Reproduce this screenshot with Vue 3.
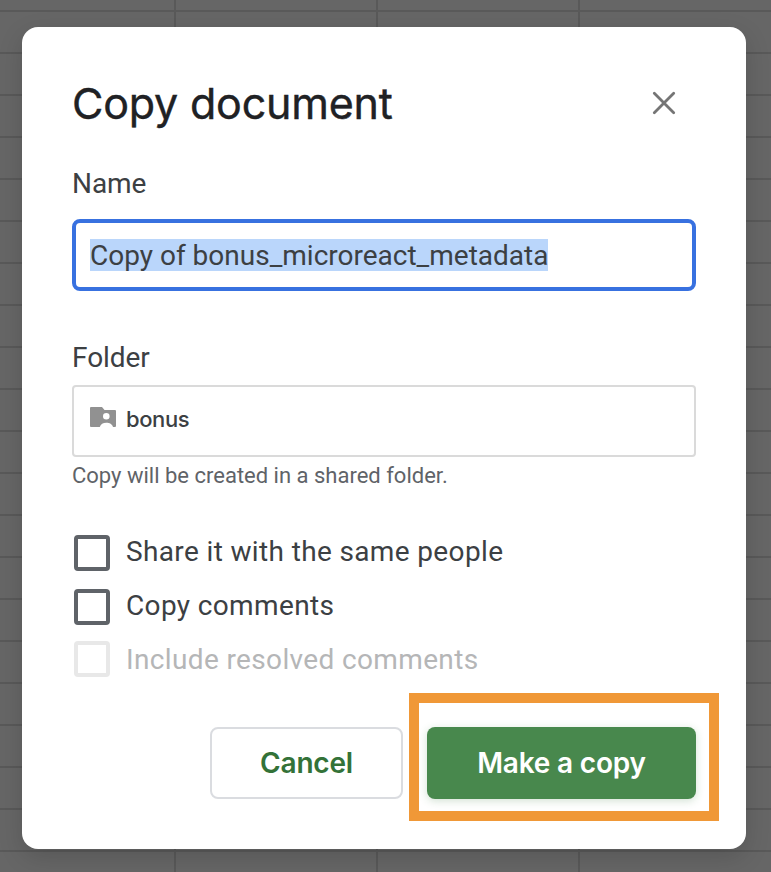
<script setup>
import { ref } from 'vue'

const name = ref('Copy of bonus_microreact_metadata')
const options = ref([
  { label: 'Share it with the same people', disabled: false },
  { label: 'Copy comments', disabled: false },
  { label: 'Include resolved comments', disabled: true },
])
</script>

<template>
  <main class="sheet">
    <section class="dialog" role="dialog" aria-labelledby="title">
      <header class="head">
        <h1 id="title">Copy document</h1>
        <button class="close" aria-label="Close">
          <svg width="24" height="24" viewBox="0 0 24 24">
            <path d="M2.3 2.3 21.7 21.7M21.7 2.3 2.3 21.7" fill="none" stroke="#757575" stroke-width="2.8" stroke-linecap="round" />
          </svg>
        </button>
      </header>

      <div class="label name-label">Name</div>
      <div class="name-field"><span class="selected">{{ name }}</span></div>

      <div class="label folder-label">Folder</div>
      <div class="folder-field">
        <svg class="folder-icon" width="26" height="20" viewBox="0 0 26 20">
          <path fill="#919191" fill-rule="evenodd" d="M1 0H12L14.5 3H25Q26 3 26 4V19Q26 20 25 20H23C22.4 17.2 19.5 15.7 16.3 15.7S10.5 17.2 9.8 20H1Q0 20 0 19V1Q0 0 1 0ZM16.3 6A3.3 3.3 0 1 0 16.3 12.6A3.3 3.3 0 1 0 16.3 6Z" />
        </svg>
        <span class="folder-name">bonus</span>
      </div>
      <p class="hint">Copy will be created in a shared folder.</p>

      <div class="options">
        <div v-for="o in options" :key="o.label" class="option" :class="{ disabled: o.disabled }">
          <span class="box"></span>
          <span class="option-label">{{ o.label }}</span>
        </div>
      </div>

      <footer class="actions">
        <button class="btn cancel"><span>Cancel</span></button>
        <div class="highlight">
          <button class="btn primary"><span>Make a copy</span></button>
        </div>
      </footer>
    </section>
  </main>
</template>

<style>
body {
  margin: 0;
  overflow: hidden;
}
</style>

<style scoped>
.sheet {
  box-sizing: border-box;
  width: 771px;
  height: 872px;
  padding: 27px 25px 23px 22px;
  overflow: hidden;
  font-family: Roboto, "Liberation Sans", sans-serif;
  background-color: #666;
  background-image:
    linear-gradient(#595959 2px, transparent 2px),
    linear-gradient(90deg, #595959 2px, transparent 2px);
  background-size: 100% 42px, 202px 100%;
  background-position: 0 10px, 174px 0;
}
.dialog {
  box-sizing: border-box;
  height: 822px;
  padding: 48px 50px 0;
  background: #fff;
  border-radius: 16px;
  box-shadow: 0 8px 24px rgba(0, 0, 0, 0.15);
}
.head {
  display: flex;
  justify-content: space-between;
  align-items: center;
  height: 56px;
}
h1 {
  margin: 0;
  font: 400 43px/56px Inter, sans-serif;
  letter-spacing: -0.2px;
  color: #202124;
  white-space: nowrap;
  -webkit-text-stroke: 0.4px #202124;
}
button {
  padding: 0;
  background: none;
  border: 0;
}
.close {
  display: flex;
  margin-right: 20px;
}
.label {
  font-size: 28px;
  line-height: 32px;
  letter-spacing: -0.05px;
  color: #3c4043;
}
.name-label {
  margin-top: 37px;
}
.name-field {
  box-sizing: border-box;
  display: flex;
  align-items: center;
  height: 72px;
  margin-top: 19px;
  padding-left: 14px;
  border: 4px solid #3871e0;
  border-radius: 8px;
}
.selected {
  padding-top: 1px;
  font-size: 28px;
  line-height: 31px;
  color: #3c4043;
  white-space: nowrap;
  background: #bad6fb;
}
.folder-label {
  margin-top: 51px;
}
.folder-field {
  box-sizing: border-box;
  display: flex;
  align-items: center;
  height: 72px;
  margin-top: 11px;
  padding: 0 0 4px 16px;
  border: 2px solid #dadada;
  border-radius: 4px;
}
.folder-icon {
  margin-bottom: 4px;
}
.folder-name {
  margin-left: 10px;
  font: 500 22px/28px Inter, sans-serif;
  letter-spacing: -0.4px;
  color: #3c4043;
}
.hint {
  margin: 5px 0 0;
  font-size: 22px;
  line-height: 28px;
  color: #5f6368;
}
.options {
  display: flex;
  flex-direction: column;
  margin-top: 35px;
}
.option {
  display: flex;
  align-items: center;
  gap: 16px;
  height: 54px;
  padding-left: 2px;
}
.box {
  box-sizing: border-box;
  width: 36px;
  height: 36px;
  margin-top: 2px;
  border: 4px solid #5f6368;
  border-radius: 4px;
}
.option-label {
  font-size: 28px;
  line-height: 32px;
  letter-spacing: 0.36px;
  color: #3c4043;
  white-space: nowrap;
}
.disabled .box {
  margin-top: -2px;
  border-color: #e8e8e8;
}
.disabled .option-label {
  color: #b5b6b7;
}
.actions {
  display: flex;
  justify-content: flex-end;
  align-items: flex-start;
  margin: 6px -23px 0 0;
}
.btn {
  box-sizing: border-box;
  height: 72px;
  border-radius: 8px;
  font: 600 28px/36px Inter, sans-serif;
  letter-spacing: -0.2px;
  white-space: nowrap;
}
.cancel {
  width: 193px;
  margin-top: 34px;
  color: #337238;
  border: 2px solid #dadce0;
}
.highlight {
  box-sizing: border-box;
  display: flex;
  width: 310px;
  height: 128px;
  margin-left: 6px;
  padding: 24px 8px;
  border: 10px solid #f09837;
}
.primary {
  width: 269px;
  color: #fff;
  background: #48884d;
  box-shadow: 0 2px 8px rgba(52, 120, 56, 0.22);
}
</style>
